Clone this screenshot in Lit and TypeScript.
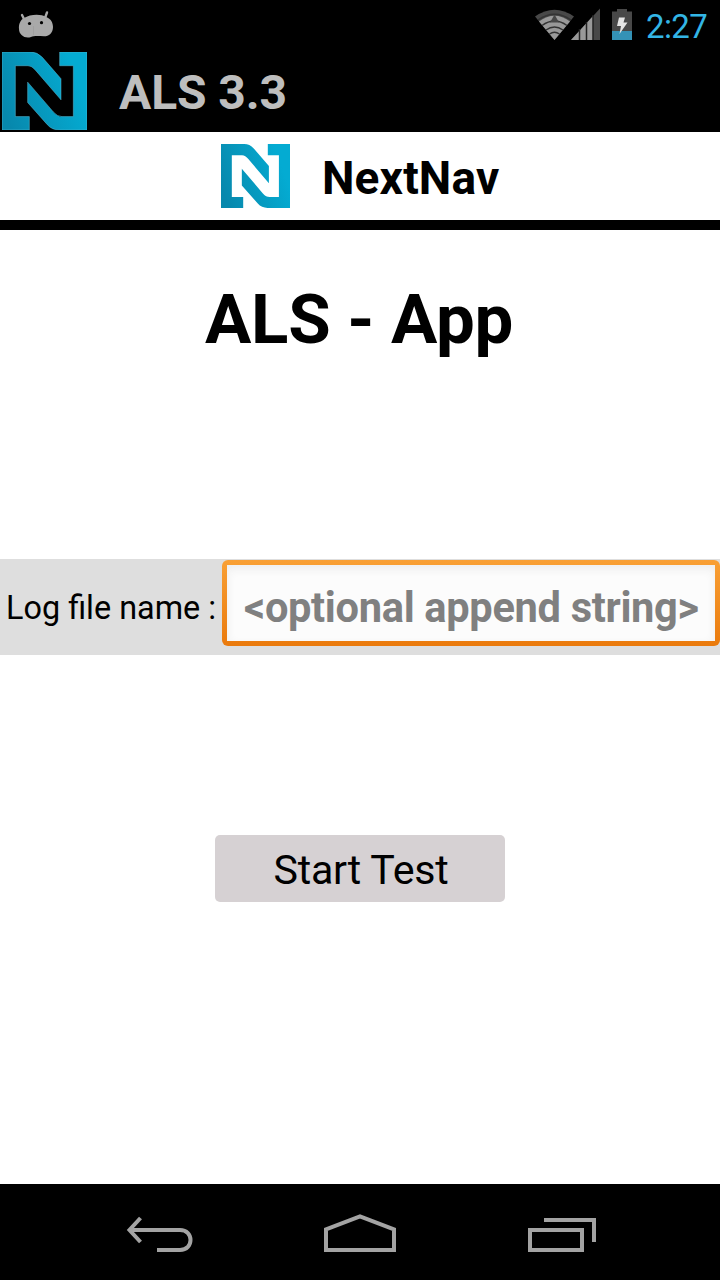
import { LitElement, html, css, svg } from "lit";
import { customElement } from "lit/decorators.js";

@customElement("brand-logo")
class BrandLogo extends LitElement {
  static styles = css`
    :host { display: block; }
    svg { display: block; width: 100%; height: 100%; }
    path { stroke: var(--logo-edge, none); stroke-width: 1.5; }
  `;
  render() {
    return html`<svg viewBox="6 12 255 233" preserveAspectRatio="none">
      <defs>
        <linearGradient id="g" gradientUnits="userSpaceOnUse" x1="6" y1="170" x2="230" y2="90">
          <stop offset="0" stop-color="#0788ad" />
          <stop offset="0.3" stop-color="#0793b8" />
          <stop offset="1" stop-color="#04abd2" />
        </linearGradient>
      </defs>
      <g fill="url(#g)">
        <path d="M6 12H92Q112 12 127 28L183 92V155L107 67Q96 53 84 53H46V205H88V245H6Z" />
        <path d="M179 12H261V245H178Q156 245 142 229L83 163V102L160 191Q172 205 186 205H220V53H179Z" />
      </g>
    </svg>`;
  }
}

@customElement("status-bar")
class StatusBar extends LitElement {
  static styles = css`
    :host { display: flex; justify-content: space-between; height: 50px; background: #000; }
    .left { margin-left: 16px; }
    .right { display: flex; }
    svg { display: block; }
    .time { width: 78px; box-sizing: border-box; padding: 6px 0 0 4px; color: #33b5e5;
      font: 400 33px/42px Roboto, sans-serif; letter-spacing: -0.6px; white-space: nowrap; }
  `;
  render() {
    return html`
      <svg class="left" width="44" height="50" viewBox="16 0 44 50">
        <path d="M22 15L24.5 20M47 12.5L45 18" stroke="#a9a9a9" stroke-width="2.4" stroke-linecap="round" />
        <path d="M24 18C30 14 41 13.5 46 17C51 18.500 53 23 53 27C53 33 49 36.300 44 36.300C39 36 34 35.500 31 37C25 39 19 35 19 29C18.500 24 20.500 20 24 18Z" fill="#a9a9a9" />
        <path d="M33.500 26V35" stroke="#999" stroke-width=".6" />
        <circle cx="29.500" cy="23.500" r="1.600" /><circle cx="41.500" cy="22.700" r="1.600" />
      </svg>
      <div class="right">
        <svg width="108" height="50" viewBox="534 0 108 50">
          <path d="M554.500 40L535 16.500Q554.500 3 574 16.500Z" fill="#484848" />
          <path d="M554.500 40L539 21.500Q554.500 10 570 21.500Z" fill="#999" />
          <g fill="none" stroke="#333" stroke-width="1.500">
            <path d="M538 20Q554.500 8.500 571 20M542 25.500Q554.500 16.500 567 25.500M546 30Q554.500 24 563 30M549.500 34Q554.500 30.500 559.500 34" />
          </g>
          <path d="M554.500 14.500L559 22.500H550Z" fill="#484848" />
          <path d="M571 40L600 8.500V40Z" fill="#484848" />
          <path d="M571 40L593 16V40Z" fill="#999" />
          <path d="M579.500 29V40M586.500 22V40M593 15V40" stroke="#222" stroke-width="1.500" />
          <path d="M612 11.500H617V9H627V11.500H632V40H612Z" fill="#484848" />
          <path d="M612 31H632V40H612Z" fill="#3492b6" />
          <path d="M619 17.500H625L623.500 22.500H627.500L619.500 34L621 26H617Z" fill="#e4e4e4" />
        </svg>
        <div class="time">2:27</div>
      </div>`;
  }
}

@customElement("nav-bar")
class NavBar extends LitElement {
  static styles = css`
    :host { display: flex; justify-content: center; height: 96px; background: #000; }
    svg { display: block; }
    .key { display: flex; justify-content: center; width: 200px; }
  `;
  private key(shape: unknown) {
    return html`<div class="key">
      <svg width="80" height="96" viewBox="0 0 80 96" fill="none" stroke="#a3a3a3" stroke-width="4">${shape}</svg>
    </div>`;
  }
  render() {
    return html`
      ${this.key(svg`<path d="M10 46H60C74 46 74 66 60 66H37" /><path d="M20.500 34L9.500 46L20.500 58" />`)}
      ${this.key(svg`<path d="M6 66V45.500L40 32.500L74 45.500V66Z" />`)}
      ${this.key(svg`<path d="M10 46H62V66H10ZM24 36H74V58" />`)}
    `;
  }
}

@customElement("app-root")
class AppRoot extends LitElement {
  static styles = css`
    :host { display: flex; flex-direction: column; width: 720px; height: 1280px; overflow: hidden;
      background: #fff; color: #000; font-family: Roboto, sans-serif; white-space: nowrap; }
    .title-bar { display: flex; height: 82px; box-sizing: border-box; padding: 2px 0 0 2px; background: #000; }
    .title-bar brand-logo { width: 85px; height: 78px; --logo-edge: #5fbcd6; }
    .app-title { margin-left: 32px; color: #bebebe; font-weight: 700; font-size: 48px; line-height: 82px; letter-spacing: -0.1px; }
    .brand { display: flex; height: 88px; box-sizing: border-box; padding: 12px 0 0 221px; }
    .brand brand-logo { width: 69px; height: 64px; }
    .brand-name { margin-left: 32px; font-weight: 700; font-size: 46px; line-height: 68px; letter-spacing: 0.15px; }
    .rule { height: 10px; background: #000; }
    h1 { margin: 0; padding: 50px 2px 0 0; height: 279px; text-align: center; font-weight: 700; font-size: 69px; line-height: 80px; letter-spacing: -0.3px; }
    .log-row { display: flex; height: 96px; background: #dedede; }
    .log-label { width: 222px; box-sizing: border-box; padding-left: 6px; font-size: 32.4px; line-height: 98px; }
    .field { box-sizing: border-box; width: 498px; height: 86px; margin-top: 1px; border-radius: 6px; padding: 5px;
      background: linear-gradient(#f9a035, #ea7a0c); }
    .field input { display: block; box-sizing: border-box; width: 488px; height: 76px; margin: 0; border: 0; outline: 0;
      padding: 9px 0 0 17px; background: #fcfcfc; box-shadow: inset 0 4px 10px #ededed;
      font: 700 41.6px/67px Roboto, sans-serif; letter-spacing: -0.32px; color: #000; }
    .field input::placeholder { color: #808080; opacity: 1; }
    .actions { display: flex; flex: 1; justify-content: center; align-items: flex-start; padding-top: 180px; }
    button { width: 290px; height: 67px; margin: 0; padding: 3px 0 0 2px; border: 0; border-radius: 5px; background: #d6d1d3;
      font: 400 41.2px/64px Roboto, sans-serif; letter-spacing: -0.22px; color: #000; }
  `;
  render() {
    return html`
      <status-bar></status-bar>
      <div class="title-bar"><brand-logo></brand-logo><div class="app-title">ALS 3.3</div></div>
      <div class="brand"><brand-logo></brand-logo><div class="brand-name">NextNav</div></div>
      <div class="rule"></div>
      <h1>ALS - App</h1>
      <div class="log-row">
        <div class="log-label">Log file name :</div>
        <div class="field"><input type="text" placeholder="&lt;optional append string&gt;" /></div>
      </div>
      <div class="actions"><button>Start Test</button></div>
      <nav-bar></nav-bar>
    `;
  }
}
